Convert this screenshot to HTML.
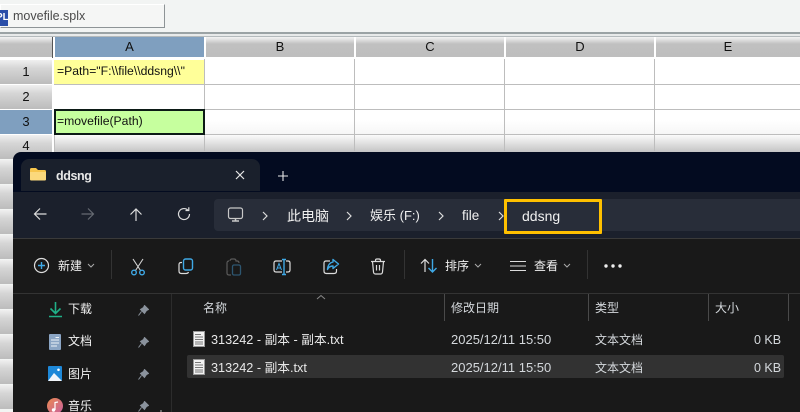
<!DOCTYPE html>
<html><head><meta charset="utf-8"><style>
html,body{margin:0;padding:0;width:800px;height:412px;overflow:hidden;background:#f2f4f3}
body{position:relative;font-family:"Liberation Sans","Noto Sans CJK SC",sans-serif}
div,span,svg{position:absolute}
.t{white-space:nowrap;line-height:16px}
.h{top:37px;height:20px;background:linear-gradient(#f4f4f4 0,#c0c0c0 7px,#bebebe 100%);text-align:center;font-size:13px;line-height:20px;color:#111}
.r{left:0;width:52px;height:24px;background:linear-gradient(#f0f0f0 0,#d6d6d6 8px,#bcbcbc 100%);text-align:center;font-size:13px;line-height:24px;color:#111}
.hl{left:0;width:800px;height:1px;background:#bdbdbd}
.vl{top:59px;width:1px;height:92px;background:#bdbdbd}
.w{color:#f1f1f1;font-size:12px}
.g{color:#d4d8dc;font-size:12px}
.d{color:#d4d8dc;font-size:13px}
.s{stroke:#dcdcdc;fill:none;stroke-width:1.2}
.b{stroke:#3fa9e6;fill:none;stroke-width:1.4}
</style></head><body>
<div style="left:0;top:4px;width:165px;height:24px;background:#f5f6f5;border:1px solid #fff;border-right:1px solid #8e9496;border-bottom:1px solid #8e9496;box-sizing:border-box"></div>
<div style="left:0;top:10px;width:8px;height:16px;background:#2a4ea8;color:#fff;font-size:10px;font-weight:bold;line-height:16px;overflow:hidden;text-indent:-4px">PL</div>
<div class="t" style="left:13px;top:8px;font-size:12.5px;color:#4a4a4a">movefile.splx</div>
<div style="left:0;top:32px;width:800px;height:2px;background:#9ba3a5"></div>
<div style="left:0;top:34px;width:800px;height:2px;background:#e8eaea"></div>
<div style="left:0;top:36px;width:800px;height:1px;background:#b4babc"></div>
<div style="left:0;top:37px;width:800px;height:22px;background:#fff"></div>
<div style="left:0;top:59px;width:800px;height:93px;background:#fff"></div>

<div class="h" style="left:0;width:52px"></div>
<div style="left:52px;top:37px;width:1px;height:21px;background:#555"></div>
<div class="h" style="left:55px;width:149px;background:#7f9fbf">A</div>
<div class="h" style="left:206px;width:148px">B</div>
<div class="h" style="left:356px;width:148px">C</div>
<div class="h" style="left:506px;width:148px">D</div>
<div class="h" style="left:656px;width:144px">E</div>

<div class="r" style="top:60px;line-height:23px">1</div>
<div class="r" style="top:85px">2</div>
<div class="r" style="top:110px;background:#7f9fbf">3</div>
<div class="r" style="top:135px;line-height:22px">4</div>
<div class="r" style="top:160px"></div>
<div class="r" style="top:185px"></div>
<div class="r" style="top:210px"></div>
<div class="r" style="top:235px"></div>
<div class="r" style="top:260px"></div>
<div class="r" style="top:285px"></div>
<div class="r" style="top:310px"></div>
<div class="r" style="top:335px"></div>
<div class="r" style="top:360px"></div>
<div class="r" style="top:385px"></div>

<div style="left:54px;top:60px;width:150px;height:24px;background:#ffff99"></div>
<div style="left:54px;top:135px;width:746px;height:17px;background:linear-gradient(#fbfbfb,#c4c4c4)"></div>
<div style="left:54px;top:120px;width:746px;height:14px;background:linear-gradient(#fff,#f6f6f6)"></div>
<div class="hl" style="left:54px;top:84px"></div>
<div class="hl" style="left:54px;top:109px"></div>
<div class="hl" style="left:54px;top:134px"></div>
<div class="vl" style="left:204px"></div>
<div class="vl" style="left:354px"></div>
<div class="vl" style="left:504px"></div>
<div class="vl" style="left:654px"></div>
<div class="vl" style="left:54px;top:135px;height:17px"></div>
<div style="left:54px;top:109px;width:151px;height:26px;background:#c6ff9e;border:2px solid #0c1a16;box-sizing:border-box"></div>
<div class="t" style="left:57px;top:63px;font-size:12.2px;color:#111">=Path="F:\\file\\ddsng\\"</div>
<div class="t" style="left:57px;top:113px;font-size:12.2px;color:#111">=movefile(Path)</div>

<!-- Explorer -->
<div style="left:13px;top:152px;width:800px;height:270px;background:#030b20;border-radius:8px 0 0 0;overflow:hidden">
  <div style="left:8px;top:7px;width:239px;height:32px;background:#1a202c;border-radius:8px 8px 0 0"></div>
  <div style="left:0;top:40px;width:800px;height:46px;background:#1b202c"></div>
  <div style="left:0;top:86px;width:800px;height:1px;background:#3a3a3a"></div>
  <div style="left:0;top:87px;width:800px;height:54px;background:#191919"></div>
  <div style="left:0;top:141px;width:800px;height:1px;background:#333"></div>
  <div style="left:0;top:142px;width:800px;height:130px;background:#191919"></div>
  <div style="left:158px;top:142px;width:1px;height:130px;background:#2c2c2c"></div>
  <div style="left:201px;top:47px;width:600px;height:32px;background:#282d39;border-radius:4px"></div>
  <div style="left:174px;top:203px;width:597px;height:23px;background:#323232;border-radius:2px"></div>
</div>

<!-- tab -->
<svg style="left:29px;top:167px" width="18" height="14" viewBox="0 0 18 14"><path d="M1 2.500Q1 1 2.500 1H7L9 3H15.500Q17 3 17 4.500V12Q17 13.500 15.500 13.500H2.500Q1 13.500 1 12Z" fill="#f7c64d"/><path d="M1 5H17V12Q17 13.500 15.500 13.500H2.500Q1 13.500 1 12Z" fill="#fbd97c"/></svg>
<div class="t" style="left:56px;top:168px;font-size:12.5px;font-weight:bold;letter-spacing:-.4px;color:#e8e8e8">ddsng</div>
<svg style="left:234px;top:169px" width="12" height="12" viewBox="0 0 12 12"><path d="M2 2L10 10M10 2L2 10" stroke="#e8e8e8" stroke-width="1.2"/></svg>
<svg style="left:277px;top:170px" width="12" height="12" viewBox="0 0 12 12"><path d="M6 1V11M1 6H11" stroke="#e8e8e8" stroke-width="1.1"/></svg>

<!-- nav -->
<svg style="left:32px;top:206px" width="16" height="16" viewBox="0 0 16 16"><path d="M14.500 8H2.500M8 2.500L2.500 8L8 13.500" class="s"/></svg>
<svg style="left:80px;top:206px" width="16" height="16" viewBox="0 0 16 16"><path d="M1.500 8H13.500M8 2.500L13.500 8L8 13.500" fill="none" stroke="#666a72" stroke-width="1.2"/></svg>
<svg style="left:128px;top:206px" width="16" height="16" viewBox="0 0 16 16"><path d="M8 15V3M2.500 8.500L8 3L13.500 8.500" class="s"/></svg>
<svg style="left:176px;top:206px" width="16" height="16" viewBox="0 0 16 16"><path d="M12.200 4.500A5.500 5.500 0 1 0 13.500 8M9.500 4.500H12.800V1.200" class="s"/></svg>
<svg style="left:227px;top:207px" width="17" height="16" viewBox="0 0 17 16"><rect x="1.500" y="1" width="14" height="10.500" rx="2" fill="none" stroke="#c8c8c8" stroke-width="1.200"/><path d="M5 14H12M8.500 12V14" stroke="#c8c8c8" stroke-width="1.500"/></svg>
<svg style="left:261px;top:211px" width="8" height="10" viewBox="0 0 8 10"><path d="M2 1L6 5L2 9" class="s"/></svg>
<div class="t" style="left:287px;top:208px;font-size:14px;color:#f0f0f0">此电脑</div>
<svg style="left:345px;top:211px" width="8" height="10" viewBox="0 0 8 10"><path d="M2 1L6 5L2 9" class="s"/></svg>
<div class="t" style="left:370px;top:208px;font-size:13px;color:#f0f0f0">娱乐 (F:)</div>
<svg style="left:437px;top:211px" width="8" height="10" viewBox="0 0 8 10"><path d="M2 1L6 5L2 9" class="s"/></svg>
<div class="t" style="left:462px;top:208px;font-size:13.5px;color:#f0f0f0">file</div>
<svg style="left:497px;top:211px" width="8" height="10" viewBox="0 0 8 10"><path d="M2 1L6 5L2 9" class="s"/></svg>
<div class="t" style="left:522px;top:208px;font-size:14px;color:#f0f0f0">ddsng</div>
<div style="left:504px;top:199px;width:98px;height:35px;border:3px solid #ffc000;box-sizing:border-box;border-radius:1px"></div>

<!-- toolbar -->
<svg style="left:33px;top:257px" width="17" height="17" viewBox="0 0 17 17"><circle cx="8.500" cy="8.500" r="7" class="s"/><path d="M8.500 5V12M5 8.500H12" class="b"/></svg>
<div class="t" style="left:58px;top:258px;font-size:12px;color:#f0f0f0">新建</div>
<svg style="left:87px;top:263px" width="8" height="6" viewBox="0 0 8 6"><path d="M1 1L4 4L7 1" stroke="#aaa" fill="none"/></svg>
<div style="left:111px;top:250px;width:1px;height:29px;background:#333"></div>
<svg style="left:130px;top:258px" width="16" height="18" viewBox="0 0 16 18"><path d="M3 1L10.500 12.500M13 1L5.500 12.500" stroke="#d4d4d4" fill="none" stroke-width="1.100"/><circle cx="4" cy="14.500" r="2.300" class="b"/><circle cx="12" cy="14.500" r="2.300" class="b"/></svg>
<svg style="left:178px;top:258px" width="16" height="17" viewBox="0 0 16 17"><rect x="5.500" y="1" width="9" height="11" rx="2" class="b"/><path d="M4 4.500H3Q1 4.500 1 6.500V13Q1 15.500 3.500 15.500H8Q10 15.500 10.500 14" class="s"/></svg>
<svg style="left:226px;top:258px" width="16" height="18" viewBox="0 0 16 18"><path d="M3 3Q1 3 1 5V15Q1 17 3 17H5M4 3Q4 1 6 1H8Q10 1 10 3H11Q13 3 13 5" stroke="#5a5a5a" fill="none" stroke-width="1.200"/><rect x="6.500" y="7" width="8" height="10" rx="1.500" fill="none" stroke="#2d5670" stroke-width="1.300"/></svg>
<svg style="left:273px;top:258px" width="18" height="18" viewBox="0 0 18 18"><path d="M9 3H3Q1 3 1 5V12Q1 14 3 14H9M13 3H15Q17 3 17 5V12Q17 14 15 14H13" class="s"/><path d="M9 1.500H13M11 1.500V16.500M9 16.500H13" class="b"/><path d="M3.500 12L6 5.500L8.500 12M4.400 10H7.600" stroke="#3fa9e6" fill="none"/></svg>
<svg style="left:323px;top:258px" width="17" height="17" viewBox="0 0 17 17"><path d="M7 3H3Q1 3 1 5V13Q1 15.500 3.500 15.500H11Q13.500 15.500 13.500 13V11" class="s"/><path d="M10 1.500L15.500 6L10 10.500V8Q6 8 4.500 11.500Q5 5 10 4Z" class="b" stroke-linejoin="round"/></svg>
<svg style="left:370px;top:258px" width="16" height="17" viewBox="0 0 16 17"><path d="M1 3.500H15M5.500 3.500V2.500Q5.500 1 7 1H9Q10.500 1 10.500 2.500V3.500M2.500 3.500L3.500 14Q3.700 16 5.500 16H10.500Q12.300 16 12.500 14L13.500 3.500M6.500 7V12.500M9.500 7V12.500" class="s"/></svg>
<div style="left:404px;top:250px;width:1px;height:29px;background:#333"></div>
<svg style="left:420px;top:258px" width="18" height="16" viewBox="0 0 18 16"><path d="M5 14V2M1 5.500L5 1.500L9 5.500" class="s"/><path d="M12.500 1V13.500M8.500 10L12.500 14L16.500 10" class="b"/></svg>
<div class="t" style="left:445px;top:258px;font-size:12px;color:#f0f0f0">排序</div>
<svg style="left:474px;top:263px" width="8" height="6" viewBox="0 0 8 6"><path d="M1 1L4 4L7 1" stroke="#aaa" fill="none"/></svg>
<svg style="left:510px;top:260px" width="16" height="12" viewBox="0 0 16 12"><path d="M0 1.500H16M0 6H16M0 10.500H16" stroke="#dcdcdc" stroke-width="1.100"/></svg>
<div class="t" style="left:534px;top:258px;font-size:12px;color:#f0f0f0">查看</div>
<svg style="left:563px;top:263px" width="8" height="6" viewBox="0 0 8 6"><path d="M1 1L4 4L7 1" stroke="#aaa" fill="none"/></svg>
<div style="left:587px;top:250px;width:1px;height:29px;background:#333"></div>
<svg style="left:604px;top:264px" width="18" height="4" viewBox="0 0 18 4"><circle cx="2" cy="2" r="1.700" fill="#eee"/><circle cx="9" cy="2" r="1.700" fill="#eee"/><circle cx="16" cy="2" r="1.700" fill="#eee"/></svg>

<!-- sidebar -->
<svg style="left:49px;top:302px" width="13" height="16" viewBox="0 0 13 16"><path d="M6.500 0V11M1.500 6.500L6.500 11.500L11.500 6.500M0 14.500H13" stroke="#20b088" fill="none" stroke-width="1.600"/></svg>
<div class="t w" style="left:68px;top:301px">下载</div>
<svg style="left:49px;top:334px" width="12" height="16" viewBox="0 0 12 16"><rect width="12" height="16" rx="1" fill="#8ba5c4"/><path d="M2 6H10M2 9H10M2 12H8M6.500 3.500H10" stroke="#eef3f8" stroke-width="1"/></svg>
<div class="t w" style="left:68px;top:333px">文档</div>
<svg style="left:48px;top:366px" width="14" height="15" viewBox="0 0 14 15"><rect width="14" height="15" rx="1" fill="#1e88d8"/><path d="M0 15L6 7L14 15Z" fill="#f2f6fa"/><circle cx="10.500" cy="3.800" r="1.300" fill="#fff"/></svg>
<div class="t w" style="left:68px;top:366px">图片</div>
<svg style="left:47px;top:398px" width="16" height="16" viewBox="0 0 16 16"><defs><linearGradient id="m" x1="0" y1="0" x2="1" y2="1"><stop offset="0" stop-color="#ea8a50"/><stop offset="1" stop-color="#c8609e"/></linearGradient></defs><circle cx="8" cy="8" r="8" fill="url(#m)"/><path d="M8 12V4.500L11 4" stroke="#fff" fill="none" stroke-width="1.200"/><circle cx="6.500" cy="12" r="1.700" fill="#fff"/></svg>
<div class="t w" style="left:68px;top:398px">音乐</div>
<svg style="left:138px;top:305px" width="11" height="11" viewBox="0 0 11 11"><path d="M6.500 0.500L10.500 4.500L8.500 5.500L6.500 8.500L2.500 4.500L5.500 2.500ZM3.500 6.500L0.500 10.500" fill="#8a929c" stroke="#8a929c"/></svg>
<svg style="left:138px;top:337px" width="11" height="11" viewBox="0 0 11 11"><path d="M6.500 0.500L10.500 4.500L8.500 5.500L6.500 8.500L2.500 4.500L5.500 2.500ZM3.500 6.500L0.500 10.500" fill="#8a929c" stroke="#8a929c"/></svg>
<svg style="left:138px;top:369px" width="11" height="11" viewBox="0 0 11 11"><path d="M6.500 0.500L10.500 4.500L8.500 5.500L6.500 8.500L2.500 4.500L5.500 2.500ZM3.500 6.500L0.500 10.500" fill="#8a929c" stroke="#8a929c"/></svg>
<svg style="left:138px;top:401px" width="11" height="11" viewBox="0 0 11 11"><path d="M6.500 0.500L10.500 4.500L8.500 5.500L6.500 8.500L2.500 4.500L5.500 2.500ZM3.500 6.500L0.500 10.500" fill="#8a929c" stroke="#8a929c"/></svg>

<!-- list header -->
<div class="t g" style="left:203px;top:300px">名称</div>
<svg style="left:316px;top:294px" width="10" height="6" viewBox="0 0 10 6"><path d="M1 5L5 1.500L9 5" stroke="#888" fill="none"/></svg>
<div class="t g" style="left:451px;top:300px">修改日期</div>
<div class="t g" style="left:595px;top:300px">类型</div>
<div class="t g" style="left:715px;top:300px">大小</div>
<div style="left:444px;top:294px;width:1px;height:27px;background:#4a4a4a"></div>
<div style="left:588px;top:294px;width:1px;height:27px;background:#4a4a4a"></div>
<div style="left:708px;top:294px;width:1px;height:27px;background:#4a4a4a"></div>
<div style="left:788px;top:294px;width:1px;height:27px;background:#4a4a4a"></div>

<!-- rows -->
<svg style="left:193px;top:331px" width="12" height="16" viewBox="0 0 12 16"><rect x="0.500" y="0.500" width="11" height="15" fill="#f2f2f2" stroke="#999"/><path d="M2 3.500H8M2 6H10M2 8.500H10M2 11H10M2 13H10" stroke="#777"/></svg>
<div class="t" style="left:211px;top:332px;font-size:12.7px;color:#e8e8e8">313242 - 副本 - 副本.txt</div>
<div class="t d" style="left:451px;top:332px">2025/12/11 15:50</div>
<div class="t g" style="left:595px;top:332px">文本文档</div>
<div class="t g" style="left:754px;top:332px;font-size:12.5px">0 KB</div>
<svg style="left:193px;top:359px" width="12" height="16" viewBox="0 0 12 16"><rect x="0.500" y="0.500" width="11" height="15" fill="#f2f2f2" stroke="#999"/><path d="M2 3.500H8M2 6H10M2 8.500H10M2 11H10M2 13H10" stroke="#777"/></svg>
<div class="t" style="left:211px;top:360px;font-size:12.7px;color:#e8e8e8">313242 - 副本.txt</div>
<div class="t d" style="left:451px;top:360px">2025/12/11 15:50</div>
<div class="t g" style="left:595px;top:360px">文本文档</div>
<div class="t g" style="left:754px;top:360px;font-size:12.5px">0 KB</div>
<div style="left:160px;top:410px;width:2px;height:2px;background:#666"></div>
</body></html>
